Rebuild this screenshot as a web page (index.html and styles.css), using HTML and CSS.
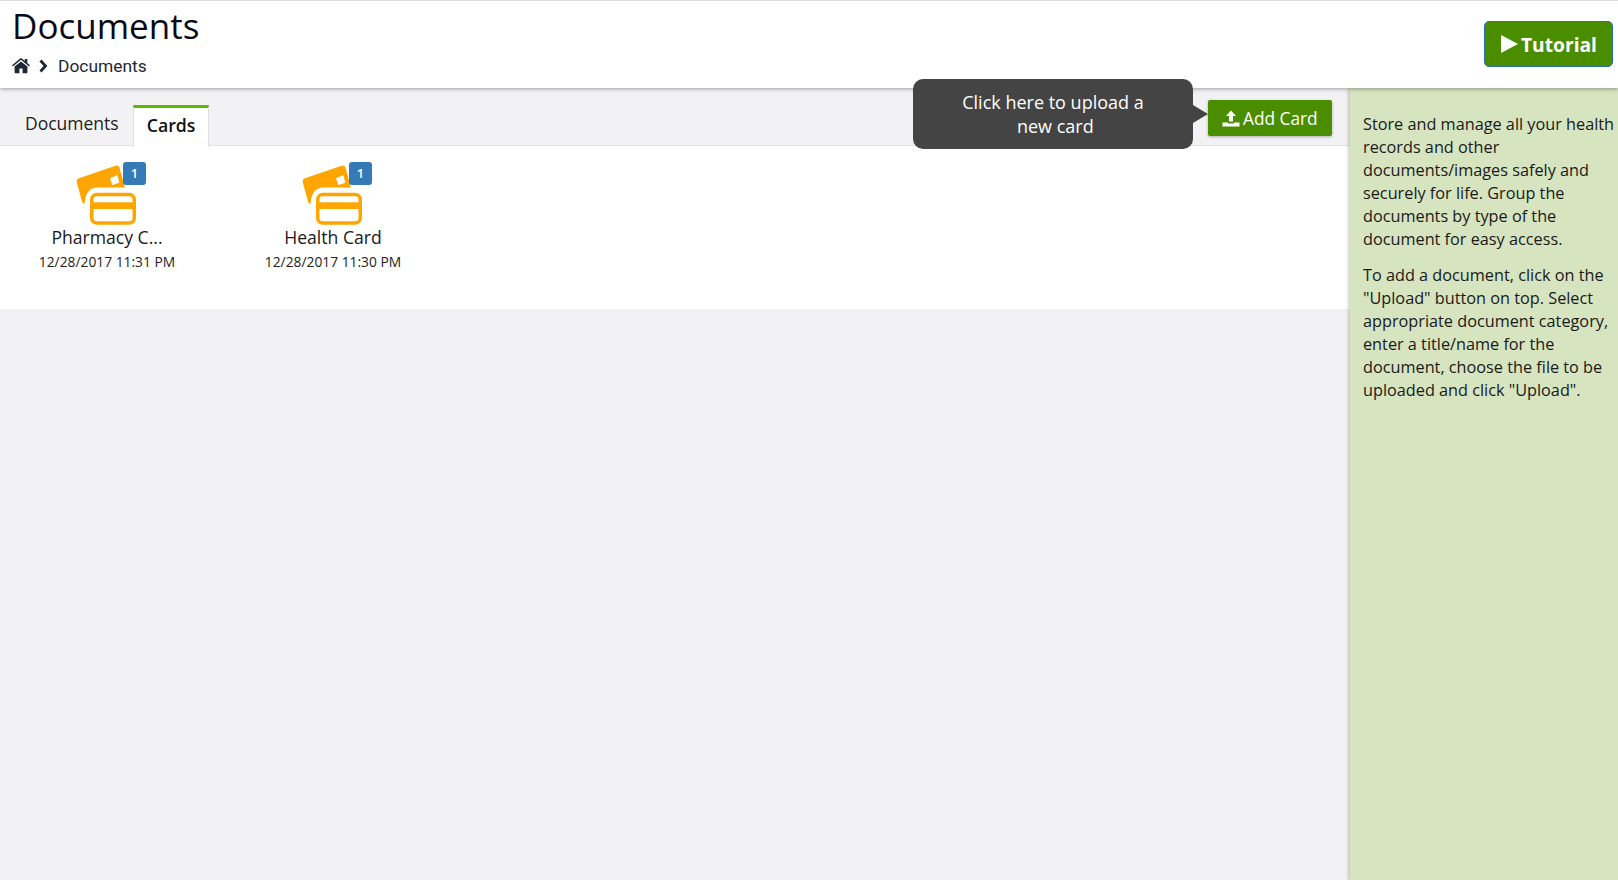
FILE: index.html
```html
<!DOCTYPE html>
<html lang="en">
<head>
<meta charset="utf-8">
<title>Documents</title>
<link rel="stylesheet" href="styles.css">
</head>
<body>
<header class="topbar">
  <div class="heading">
    <h1 class="title">Documents</h1>
    <nav class="crumbs">
      <svg class="home-icon" viewBox="0 0 18 16" width="18" height="16"><path d="M9 3.400 2.600 8.600v6c0 .4.300.7.600.7h4.200V10.500h3.200v4.800h4.200c.3 0 .6-.3.6-.7v-6zM17.900 7.300 15.300 5.100V1h-2.500v2L9.900.6C9.400.1 8.600.1 8.100.6L.1 7.300l.8 1.100L9 1.800l8.100 6.600z"/></svg>
      <svg class="chev-icon" viewBox="0 0 10 14" width="10" height="14"><path d="M2.500 1.500 7.500 7l-5 5.500" fill="none" stroke="#1d2733" stroke-width="2.800"/></svg>
      <span>Documents</span>
    </nav>
  </div>
  <button class="tutorial"><svg viewBox="0 0 17 18" width="17" height="18"><path d="M0 0v18l17-9z" fill="#fff"/></svg>Tutorial</button>
</header>
<div class="main">
  <section class="content">
    <div class="tabbar">
      <div class="tabs">
        <a class="tab">Documents</a>
        <a class="tab active">Cards</a>
      </div>
      <button class="add-card"><svg viewBox="0 0 18 17" width="18" height="17"><path d="M9 .5 14 6h-3v5.500H7V6H4zM.5 12.500H6v1h6v-1h5.500V16.500H.5z" fill="#fff"/></svg>Add Card</button>
      <div class="tip">Click here to upload a<br>&nbsp;new card</div>
    </div>
    <div class="cards">
      <article class="card">
        <div class="card-icon">
          <svg viewBox="0 0 62 62" width="62" height="62"><path d="M3 13.200 39.500.7c2-.6 3.500.3 4 2L49 22.500H21c-6.500 0-11 5-12 13l-.3 2c-.3 1.200-1.700 1.300-2.300.2L.7 17c-.4-1.700.6-3.300 2.300-3.800z" fill="#ffa500"/><path d="m34 13.300 7.300-3.300 2 7.700-7 2.300z" fill="#fff"/><rect x="15.750" y="29.500" width="42.500" height="28.500" rx="5" fill="#fff" stroke="#ffa500" stroke-width="3.500"/><rect x="15" y="37.300" width="44" height="6.700" fill="#ffa500"/></svg>
          <span class="badge">1</span>
        </div>
        <div class="card-name">Pharmacy C...</div>
        <div class="card-date">12/28/2017 11:31 PM</div>
      </article>
      <article class="card">
        <div class="card-icon">
          <svg viewBox="0 0 62 62" width="62" height="62"><path d="M3 13.200 39.500.7c2-.6 3.500.3 4 2L49 22.500H21c-6.500 0-11 5-12 13l-.3 2c-.3 1.200-1.700 1.300-2.300.2L.7 17c-.4-1.700.6-3.300 2.300-3.800z" fill="#ffa500"/><path d="m34 13.300 7.300-3.300 2 7.700-7 2.300z" fill="#fff"/><rect x="15.750" y="29.500" width="42.500" height="28.500" rx="5" fill="#fff" stroke="#ffa500" stroke-width="3.500"/><rect x="15" y="37.300" width="44" height="6.700" fill="#ffa500"/></svg>
          <span class="badge">1</span>
        </div>
        <div class="card-name">Health Card</div>
        <div class="card-date">12/28/2017 11:30 PM</div>
      </article>
    </div>
  </section>
  <aside class="help">
    <p>Store and manage all your health records and other documents/images safely and securely for life. Group the documents by type of the document for easy access.</p>
    <p>To add a document, click on the "Upload" button on top. Select appropriate document category, enter a title/name for the document, choose the file to be uploaded and click "Upload".</p>
  </aside>
</div>
</body>
</html>
```
FILE: styles.css
```css
* { box-sizing: border-box; }
html, body { height: 100%; }
body {
  margin: 0;
  height: 880px;
  overflow: hidden;
  display: flex;
  flex-direction: column;
  font-family: "Open Sans", sans-serif;
  color: #1a1a1a;
  background: #f2f2f4;
}
.topbar {
  height: 88px;
  flex: none;
  position: relative;
  z-index: 2;
  display: flex;
  justify-content: space-between;
  align-items: flex-start;
  padding: 0 5px 0 12px;
  background: #fff;
  border-top: 1px solid #dcdcdc;
  box-shadow: 0 1px 4px rgba(0, 0, 0, .35);
}
.title {
  margin: 2px 0 0;
  font-size: 35px;
  font-weight: 400;
  line-height: 45px;
  color: #0a0a14;
}
.crumbs {
  display: flex;
  align-items: center;
  margin-top: 6px;
  font-family: Roboto, sans-serif;
  font-size: 17.400px;
  line-height: 24px;
  color: #1d2733;
}
.home-icon { fill: #1d2733; margin-right: 8px; }
.chev-icon { margin-right: 10px; }
.tutorial {
  display: flex;
  align-items: center;
  gap: 3px;
  width: 129px;
  height: 46px;
  margin-top: 20px;
  padding: 0 0 0 16px;
  font: 700 19.200px "Open Sans", sans-serif;
  color: #fff;
  background: #4a8e00;
  border: 1px solid #2a70b0;
  border-radius: 5px;
}
.main { flex: 1; display: flex; min-height: 0; }
.content { flex: 1; min-width: 0; }
.tabbar {
  height: 58px;
  position: relative;
  display: flex;
  justify-content: space-between;
  align-items: flex-start;
  padding: 0 18px 0 11px;
  border-bottom: 1px solid #e2e2e4;
}
.tabs { display: flex; padding-top: 17px; }
.tab {
  height: 42px;
  padding: 0 14px;
  font-size: 17.500px;
  line-height: 37px;
  color: #222;
}
.tab.active {
  padding: 0 13px;
  line-height: 34px;
  font-weight: 600;
  font-size: 17.700px;
  color: #111;
  background: #fff;
  border: solid #dddde0;
  border-width: 0 1px;
  border-top: 3px solid #5cb800;
}
.add-card {
  display: flex;
  align-items: center;
  gap: 3px;
  width: 124px;
  height: 36px;
  margin-top: 12px;
  padding: 0 0 0 14px;
  font: 400 17.300px "Open Sans", sans-serif;
  color: #fff;
  background: #4a8e00;
  border: 0;
  border-radius: 2px;
  box-shadow: 0 1px 3px rgba(0, 0, 0, .3);
}
.tip {
  position: absolute;
  top: -9px;
  right: 157px;
  width: 280px;
  height: 70px;
  padding-top: 11px;
  font-size: 18px;
  line-height: 24px;
  text-align: center;
  color: #fff;
  background: #444;
  border-radius: 10px;
  z-index: 3;
}
.tip::after {
  content: "";
  position: absolute;
  top: 26px;
  right: -15px;
  border-left: 15px solid #444;
  border-top: 9px solid transparent;
  border-bottom: 9px solid transparent;
}
.cards {
  height: 163px;
  display: flex;
  gap: 36px;
  padding: 19px 0 0 12px;
  background: #fff;
}
.card { width: 190px; text-align: center; }
.card-icon {
  position: relative;
  width: 62px;
  height: 62px;
  margin: 0 auto;
}
.card-icon svg { display: block; }
.badge {
  position: absolute;
  top: -3px;
  right: -8px;
  width: 23px;
  height: 23px;
  font-size: 13px;
  font-weight: 600;
  line-height: 23px;
  color: #fff;
  background: #337ab7;
  border-radius: 3px;
}
.card-name {
  margin-top: -2px;
  font-size: 17.600px;
  line-height: 24px;
  color: #1a1a1a;
}
.card-date {
  margin-top: 3px;
  font-size: 13.800px;
  line-height: 20px;
  color: #222;
}
.help {
  width: 268px;
  flex: none;
  position: relative;
  padding: 25px 0 0 13px;
  font-size: 16.250px;
  line-height: 23px;
  color: #1a1a1a;
  background: #d6e4c0;
  box-shadow: -2px 0 3px rgba(0, 0, 0, .18);
}
.help p { margin: 0 0 13px; }
```
